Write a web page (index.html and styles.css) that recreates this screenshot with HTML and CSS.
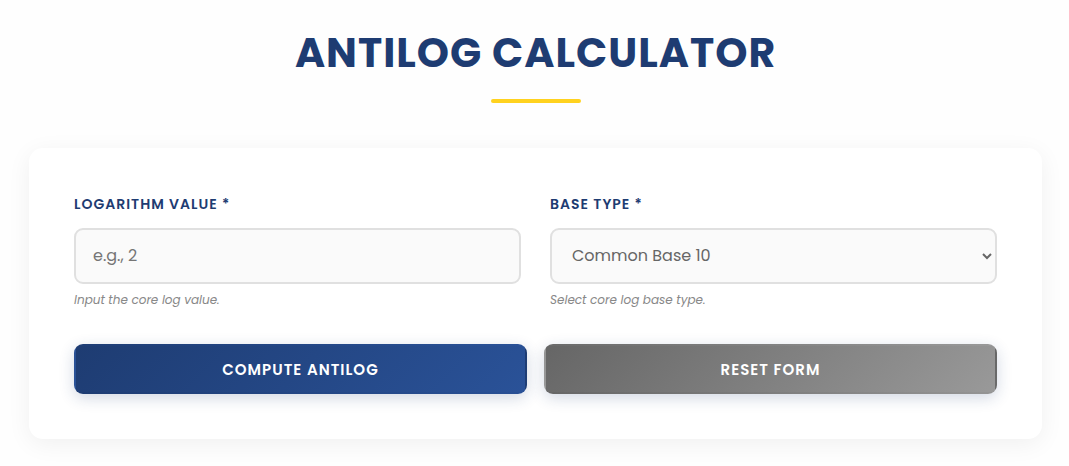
FILE: index.html
```html
<!DOCTYPE html>
<html lang="en">
<head>
  <meta charset="UTF-8" />
  <meta name="viewport" content="width=device-width, initial-scale=1.0" />
  <title>Antilog Calculator</title>
  <link rel="stylesheet" href="styles.css">
</head>
<body>

  <main class="calculator">
    <h1 class="title">Antilog Calculator</h1>

    <form class="card">
      <div class="fields">
        <div class="field">
          <label for="logValue">Logarithm Value *</label>
          <input type="text" id="logValue" inputmode="decimal" placeholder="e.g., 2" aria-describedby="logValueHint" />
          <small id="logValueHint">Input the core log value.</small>
        </div>

        <div class="field">
          <label for="baseType">Base Type *</label>
          <select id="baseType" aria-describedby="baseTypeHint">
            <option value="10">Common Base 10</option>
          </select>
          <small id="baseTypeHint">Select core log base type.</small>
        </div>
      </div>

      <div class="actions">
        <button type="button" class="btn btn-primary">Compute Antilog</button>
        <button type="reset" class="btn btn-reset">Reset Form</button>
      </div>
    </form>
  </main>

</body>
</html>
```
FILE: styles.css
```css
* {
  box-sizing: border-box;
}

body {
  margin: 0;
  font-family: Poppins, Inter, sans-serif;
  background: #fefefe;
  color: #666;
}

.calculator {
  padding: 28px 27px 27px 29px;
}

/* Heading with the yellow underline */
.title {
  margin: 0 0 45px;
  color: #1e3c72;
  font-size: 41px;
  font-weight: 700;
  line-height: 50px;
  letter-spacing: 1px;
  text-align: center;
  text-transform: uppercase;
}
.title::after {
  content: "";
  display: block;
  width: 90px;
  height: 4px;
  margin: 21px auto 0;
  border-radius: 2px;
  background: #ffd21f;
}

.card {
  padding: 45px;
  border-radius: 14px;
  background: #fff;
  box-shadow: 0 5px 25px rgba(0, 0, 0, 0.06);
}

/* Fields */
.fields {
  display: grid;
  grid-template-columns: 1fr 1fr;
  gap: 29px;
  margin-bottom: 34px;
}
.field {
  display: flex;
  flex-direction: column;
}
.field label {
  margin-bottom: 13px;
  color: #1e3c72;
  font-size: 14px;
  font-weight: 600;
  line-height: 22px;
  letter-spacing: 1px;
  text-transform: uppercase;
}
.field input,
.field select {
  width: 100%;
  height: 56px;
  padding: 0 17px 2px;
  border: 2px solid #e0e0e0;
  border-radius: 9px;
  background: #fafafa;
  color: #666;
  font-family: inherit;
  font-size: 16px;
}
.field input::placeholder {
  color: #757575;
}
.field select {
  padding: 0 2px 2px 16px;
}
.field input:focus,
.field select:focus {
  border-color: #2a5298;
  outline: none;
}
.field small {
  margin-top: 6px;
  color: #888;
  font-size: 12px;
  font-style: italic;
  line-height: 20px;
}

/* Buttons */
.actions {
  display: grid;
  grid-template-columns: 1fr 1fr;
  gap: 17px;
}
.btn {
  height: 50px;
  border: 2px solid transparent;
  border-radius: 9px;
  color: #fff;
  font-family: inherit;
  font-size: 15px;
  font-weight: 600;
  letter-spacing: 1px;
  text-transform: uppercase;
  cursor: pointer;
  box-shadow: 0 4px 15px rgba(30, 60, 114, 0.2);
}
.btn-primary {
  background-image: linear-gradient(135deg, #1e3c72, #2a5298);
}
.btn-reset {
  background-image: linear-gradient(135deg, #666, #999);
}

@media (max-width: 600px) {
  .card {
    padding: 25px;
  }
  .fields,
  .actions {
    grid-template-columns: 1fr;
  }
}
```
